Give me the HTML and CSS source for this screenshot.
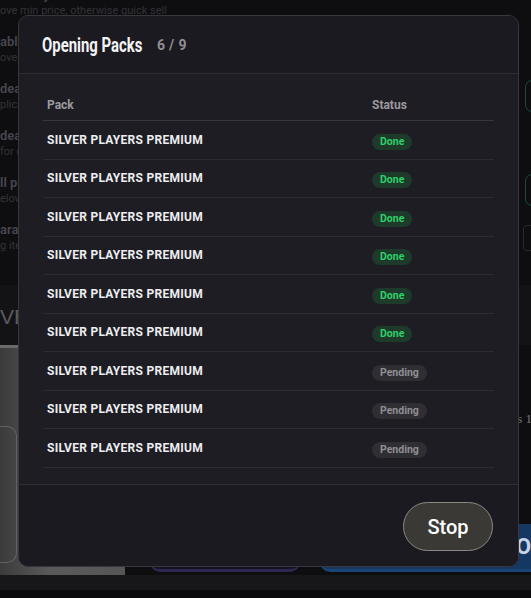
FILE: index.html
```html
<!DOCTYPE html>
<html>
<head>
<meta charset="utf-8">
<link rel="stylesheet" href="styles.css">
</head>
<body>
<div class="page">
  <div class="settings">
    <div class="set-item"><div><div class="set-title">tale Players</div><div class="set-desc">ove min price, otherwise quick sell</div></div></div>
    <div class="set-item"><div><div class="set-title">able</div><div class="set-desc">ove</div></div></div>
    <div class="set-item"><div><div class="set-title">dea</div><div class="set-desc">plica</div></div><div class="ctrl teal"></div></div>
    <div class="set-item"><div><div class="set-title">dea</div><div class="set-desc">for c</div></div></div>
    <div class="set-item"><div><div class="set-title">ll p</div><div class="set-desc">elow</div></div><div class="ctrl teal"></div></div>
    <div class="set-item"><div><div class="set-title">arat</div><div class="set-desc">g ite</div></div><div class="ctrl-pair"><span class="ctrl-sm"></span><span class="ctrl-sm"></span></div></div>
  </div>
  <div class="hero">VE</div>
  <div class="content">
    <div class="card-img"><div class="card-outline"></div></div>
    <div class="content-main">
      <div class="side-text">s 1</div>
      <div class="btn-row">
        <div class="bg-btn purple"></div>
        <div class="bg-btn blue">Open</div>
      </div>
    </div>
  </div>
  <div class="bottom-bar"></div>
  <div class="foot"></div>

  <div class="modal">
    <div class="modal-head">
      <div class="title"><span>Opening Packs</span></div>
      <div class="count">6 / 9</div>
    </div>
    <div class="modal-body">
      <div class="row head-row"><div class="cell">Pack</div><div class="cell">Status</div></div>
      <div class="row"><div class="cell name">SILVER PLAYERS PREMIUM</div><div class="cell"><span class="badge done">Done</span></div></div>
      <div class="row"><div class="cell name">SILVER PLAYERS PREMIUM</div><div class="cell"><span class="badge done">Done</span></div></div>
      <div class="row"><div class="cell name">SILVER PLAYERS PREMIUM</div><div class="cell"><span class="badge done">Done</span></div></div>
      <div class="row"><div class="cell name">SILVER PLAYERS PREMIUM</div><div class="cell"><span class="badge done">Done</span></div></div>
      <div class="row"><div class="cell name">SILVER PLAYERS PREMIUM</div><div class="cell"><span class="badge done">Done</span></div></div>
      <div class="row"><div class="cell name">SILVER PLAYERS PREMIUM</div><div class="cell"><span class="badge done">Done</span></div></div>
      <div class="row"><div class="cell name">SILVER PLAYERS PREMIUM</div><div class="cell"><span class="badge pending">Pending</span></div></div>
      <div class="row"><div class="cell name">SILVER PLAYERS PREMIUM</div><div class="cell"><span class="badge pending">Pending</span></div></div>
      <div class="row"><div class="cell name">SILVER PLAYERS PREMIUM</div><div class="cell"><span class="badge pending">Pending</span></div></div>
    </div>
    <div class="modal-foot">
      <button class="stop">Stop</button>
    </div>
  </div>
</div>
</body>
</html>
```
FILE: styles.css
```css
* { box-sizing: border-box; margin: 0; padding: 0; }
html, body { background: #0e0e11; }
body { margin: 0; font-family: Roboto, "Liberation Sans", sans-serif; }

.page {
  position: relative;
  width: 531px;
  height: 598px;
  overflow: hidden;
  background: #0e0e11;
  display: flex;
  flex-direction: column;
}

/* background page (dimmed) */
.settings {
  display: flex;
  flex-direction: column;
  margin-top: -13px;
  flex: none;
}
.set-item {
  height: 47px;
  display: flex;
  justify-content: space-between;
  align-items: flex-start;
}
.set-title {
  font-size: 13px;
  line-height: 16px;
  font-weight: 600;
  color: #47474c;
  white-space: nowrap;
}
.set-desc {
  font-size: 11px;
  line-height: 14px;
  margin-top: 1px;
  color: #333337;
  white-space: nowrap;
}
.ctrl {
  width: 60px;
  height: 32px;
  margin-right: -54px;
  margin-top: -1px;
  border-radius: 7px;
}
.teal { border: 1px solid #1b4941; }
.ctrl-pair { display: flex; gap: 4px; margin-right: -20px; margin-top: 3px; }
.ctrl-sm { display: block; width: 12px; height: 26px; border: 1px solid #29292d; border-radius: 4px; }

.hero {
  margin-top: 16px;
  height: 60px;
  flex: none;
  background: #131316;
  color: #5b5b60;
  font-size: 21px;
  line-height: 64px;
  font-family: "Liberation Sans", sans-serif;
}

.content {
  height: 230px;
  flex: none;
  display: flex;
}
.card-img {
  width: 125px;
  flex: none;
  background: linear-gradient(90deg, #3b3b3c 0%, #5a5a5b 40%, #555556 100%);
  padding: 78px 108px 12px 0;
  border-top: 3px solid #6a6a6b;
}
.card-outline {
  height: 100%;
  border: 1px solid #626264;
  border-left: none;
  border-radius: 0 10px 10px 0;
}
.content-main {
  flex: 1;
  min-width: 0;
  display: flex;
  flex-direction: column;
  padding-bottom: 3px;
}
.side-text {
  margin-top: 66px;
  text-align: right;
  font-family: "Liberation Serif", serif;
  font-size: 13px;
  color: #77777b;
  margin-right: -1px;
}
.btn-row {
  margin-top: auto;
  display: flex;
  gap: 20px;
  padding-left: 25px;
}
.bg-btn {
  height: 48px;
  border-radius: 10px;
  flex: none;
}
.purple { width: 150px; background: #141322; border-bottom: 3px solid #2c2852; }
.blue {
  width: 260px;
  background: #143862;
  border-bottom: 3px solid #1a4476;
  color: #c4d3e8;
  font-size: 22px;
  font-weight: 700;
  line-height: 46px;
  padding-left: 196px;
}

.bottom-bar { height: 15px; flex: none; background: #17171a; }
.foot { height: 8px; flex: none; background: #0a0a0c; }

/* modal */
.modal {
  position: absolute;
  left: 18px;
  top: 15px;
  width: 501px;
  height: 552px;
  background: #1e1d24;
  border: 1px solid #38373e;
  border-radius: 10px;
  display: flex;
  flex-direction: column;
  overflow: hidden;
}
.modal-head {
  height: 58px;
  flex: none;
  background: #1b1a20;
  border-bottom: 1px solid #2e2d34;
  display: flex;
  align-items: center;
  gap: 14px;
  padding-left: 23px;
}
.title {
  width: 101px;
  white-space: nowrap;
  color: #f4f4f6;
  font-size: 20px;
  font-weight: 700;
  line-height: 24px;
}
.title span {
  display: inline-block;
  transform: scaleX(0.745);
  transform-origin: left center;
}
.count {
  color: #8f8f94;
  font-size: 14px;
  font-weight: 700;
  letter-spacing: 0.3px;
}

.modal-body {
  flex: 1;
  padding: 16px 24px 0 24px;
}
.row {
  display: grid;
  grid-template-columns: 325px 1fr;
  align-items: center;
  height: 38.5px;
  border-bottom: 1px solid #2c2b32;
}
.head-row {
  height: 31px;
  border-bottom: 1px solid #37363d;
}
.cell { padding-left: 4px; }
.head-row .cell {
  color: #9a9a9f;
  font-size: 12px;
  font-weight: 700;
}
.name {
  color: #ededf0;
  font-size: 12px;
  font-weight: 700;
  letter-spacing: 0.27px;
  white-space: nowrap;
}
.badge {
  display: inline-block;
  height: 16px;
  line-height: 16px;
  padding: 0 8px;
  border-radius: 8px;
  font-size: 10.5px;
  font-weight: 700;
}
.done { background: #1d3a2a; color: #2fcf69; }
.pending { background: #2f2e33; color: #8f8e93; }

.modal-foot {
  height: 82px;
  flex: none;
  background: #1b1a20;
  border-top: 1px solid #2f2e35;
  display: flex;
  justify-content: flex-end;
  align-items: flex-start;
  padding: 17px 25px 0 0;
}
.stop {
  width: 90px;
  height: 49px;
  border-radius: 25px;
  background: #3a3935;
  border: 1px solid #8a8984;
  color: #ffffff;
  font-family: Roboto, "Liberation Sans", sans-serif;
  font-size: 20px;
  font-weight: 500;
}
```
